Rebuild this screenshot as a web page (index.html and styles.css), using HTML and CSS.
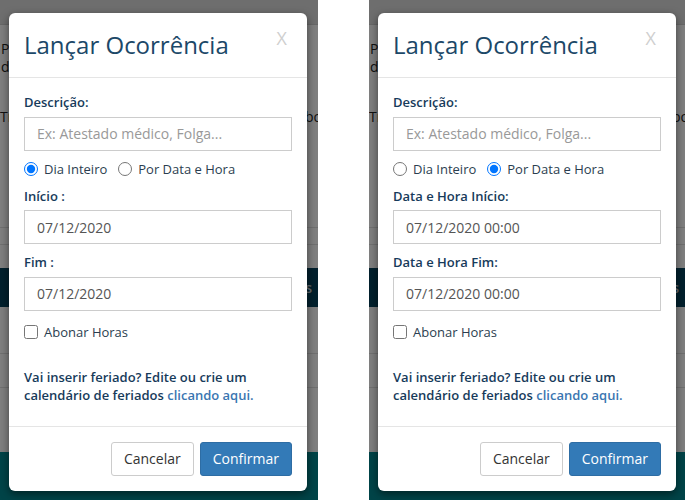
FILE: index.html
```html
<!DOCTYPE html>
<html lang="pt-BR">
<head>
    <meta charset="UTF-8">
    <title>Lançar Ocorrência</title>
    <link rel="stylesheet" href="styles.css">
</head>
<body>
    <div class="shot shot-left">
        <div class="page">
            <div class="navbar"></div>
            <div class="page-text">
                <p>P</p>
                <p>d</p>
            </div>
            <div class="page-row"><span>Tra</span><span>bo</span></div>
            <div class="table-lines">
                <div class="line"></div>
                <div class="line"></div>
            </div>
            <div class="dark-band"><span>s</span></div>
            <div class="table-lines bottom">
                <div class="line"></div>
                <div class="line"></div>
            </div>
            <div class="teal-band"></div>
        </div>
        <div class="backdrop"></div>

        <div class="modal">
            <div class="modal-header">
                <span class="close">X</span>
                <h4 class="modal-title">Lançar Ocorrência</h4>
            </div>
            <div class="modal-body">
                <label class="field-label">Descrição:</label>
                <input class="form-control" type="text" placeholder="Ex: Atestado médico, Folga...">

                <div class="radio-row">
                    <label><input type="radio" name="tipo1" checked> Dia Inteiro</label>
                    <label><input type="radio" name="tipo1"> Por Data e Hora</label>
                </div>

                <div class="form-group">
                    <label class="field-label">Início :</label>
                    <input class="form-control" type="text" value="07/12/2020">
                </div>
                <div class="form-group">
                    <label class="field-label">Fim :</label>
                    <input class="form-control" type="text" value="07/12/2020">
                </div>

                <div class="check-row">
                    <label><input type="checkbox"> Abonar Horas</label>
                </div>

                <p class="hint">Vai inserir feriado? Edite ou crie um calendário de feriados <a href="#">clicando aqui.</a></p>
            </div>
            <div class="modal-footer">
                <button class="btn btn-default">Cancelar</button>
                <button class="btn btn-primary">Confirmar</button>
            </div>
        </div>
    </div>

    <div class="shot shot-right">
        <div class="page">
            <div class="navbar"></div>
            <div class="page-text">
                <p>P</p>
                <p>d</p>
            </div>
            <div class="page-row"><span>Tra</span><span>bo</span></div>
            <div class="table-lines">
                <div class="line"></div>
                <div class="line"></div>
            </div>
            <div class="dark-band"><span>s</span></div>
            <div class="table-lines bottom">
                <div class="line"></div>
                <div class="line"></div>
            </div>
            <div class="teal-band"></div>
        </div>
        <div class="backdrop"></div>

        <div class="modal">
            <div class="modal-header">
                <span class="close">X</span>
                <h4 class="modal-title">Lançar Ocorrência</h4>
            </div>
            <div class="modal-body">
                <label class="field-label">Descrição:</label>
                <input class="form-control" type="text" placeholder="Ex: Atestado médico, Folga...">

                <div class="radio-row">
                    <label><input type="radio" name="tipo2"> Dia Inteiro</label>
                    <label><input type="radio" name="tipo2" checked> Por Data e Hora</label>
                </div>

                <div class="form-group">
                    <label class="field-label">Data e Hora Início:</label>
                    <input class="form-control" type="text" value="07/12/2020 00:00">
                </div>
                <div class="form-group">
                    <label class="field-label">Data e Hora Fim:</label>
                    <input class="form-control" type="text" value="07/12/2020 00:00">
                </div>

                <div class="check-row">
                    <label><input type="checkbox"> Abonar Horas</label>
                </div>

                <p class="hint">Vai inserir feriado? Edite ou crie um calendário de feriados <a href="#">clicando aqui.</a></p>
            </div>
            <div class="modal-footer">
                <button class="btn btn-default">Cancelar</button>
                <button class="btn btn-primary">Confirmar</button>
            </div>
        </div>
    </div>
</body>
</html>
```

FILE: styles.css
```css
body {
    margin: 0;
    display: flex;
    width: 685px;
    height: 500px;
    background-color: #fff;
    font-family: "Open Sans", "Noto Sans", sans-serif;
    font-size: 13px;
    color: #173b5b;
}

.shot {
    position: relative;
    height: 500px;
    overflow: hidden;
}

.shot-left {
    width: 318px;
}

.shot-right {
    width: 316px;
    margin-left: 51px;
}

/* page behind the modal */
.page {
    height: 100%;
    display: flex;
    flex-direction: column;
    background-color: #fff;
    color: #222;
    font-size: 14px;
}

.navbar {
    height: 24px;
    background-color: #dcdcdc;
    border-bottom: 1px solid #cfcfcf;
}

.page-text {
    padding: 15px 0 0 1px;
}

.page-text p {
    margin: 0;
    line-height: 18px;
}

.page-row {
    display: flex;
    justify-content: space-between;
    margin-top: 32px;
    line-height: 18px;
    margin-right: -4px;
}

.table-lines {
    margin-top: 101px;
}

.table-lines .line {
    height: 16px;
    border-top: 1px solid #e0e0e0;
}

.table-lines.bottom {
    margin-top: 46px;
}

.table-lines.bottom .line {
    height: 33px;
}

.dark-band {
    margin-top: 7px;
    height: 39px;
    background-color: #04405a;
    color: #c9d3d8;
    font-weight: 600;
    display: flex;
    align-items: center;
    justify-content: flex-end;
    padding-right: 6px;
}

.teal-band {
    margin-top: auto;
    height: 48px;
    background-color: #008890;
}

.backdrop {
    position: absolute;
    inset: 0;
    background-color: rgba(0, 0, 0, 0.5);
}

/* modal */
.modal {
    position: absolute;
    top: 13px;
    left: 9px;
    width: 298px;
    background-color: #fff;
    border-radius: 6px;
    box-shadow: 0 3px 9px rgba(0, 0, 0, 0.5);
}

.modal-header {
    padding: 15px;
    border-bottom: 1px solid #e5e5e5;
}

.modal-title {
    margin: 0;
    font-size: 24px;
    font-weight: 400;
    line-height: 34px;
    color: #1c4868;
}

.close {
    float: right;
    margin-right: 5px;
    font-size: 18px;
    line-height: 20px;
    color: #cfcfcf;
}

.modal-body {
    padding: 15px 15px 0;
}

.field-label {
    display: block;
    margin-bottom: 5px;
    font-weight: 600;
    line-height: 18.5px;
}

.form-control {
    display: block;
    box-sizing: border-box;
    width: 100%;
    height: 34px;
    margin: 0;
    padding: 6px 12px;
    border: 1px solid #ccc;
    border-radius: 0;
    font-family: inherit;
    font-size: 14px;
    color: #555;
    outline: none;
}

.form-control::placeholder {
    color: #999;
}

.radio-row,
.check-row {
    display: flex;
    gap: 11px;
    height: 20px;
    align-items: center;
    color: #2b3e50;
}

.radio-row {
    margin: 8px 0 8px;
}

.radio-row label,
.check-row label {
    display: flex;
    align-items: center;
    gap: 6px;
}

.radio-row input,
.check-row input {
    margin: 0;
    width: 14px;
    height: 14px;
}

.form-group {
    margin-bottom: 9px;
}

.check-row {
    margin-top: 11px;
}

.hint {
    margin: 26px 0 0;
    padding-bottom: 22px;
    font-weight: 600;
    line-height: 18px;
}

.hint a {
    color: #3a76b1;
    text-decoration: none;
}

.modal-footer {
    display: flex;
    justify-content: flex-end;
    gap: 6px;
    padding: 15px;
    border-top: 1px solid #e5e5e5;
}

.btn {
    height: 34px;
    padding: 6px 12px;
    border: 1px solid transparent;
    border-radius: 3px;
    font-family: inherit;
    font-size: 14px;
    line-height: 20px;
}

.btn-default {
    background-color: #fff;
    border-color: #ccc;
    color: #333;
}

.btn-primary {
    background-color: #337ab7;
    border-color: #2e6da4;
    color: #fff;
}
```
